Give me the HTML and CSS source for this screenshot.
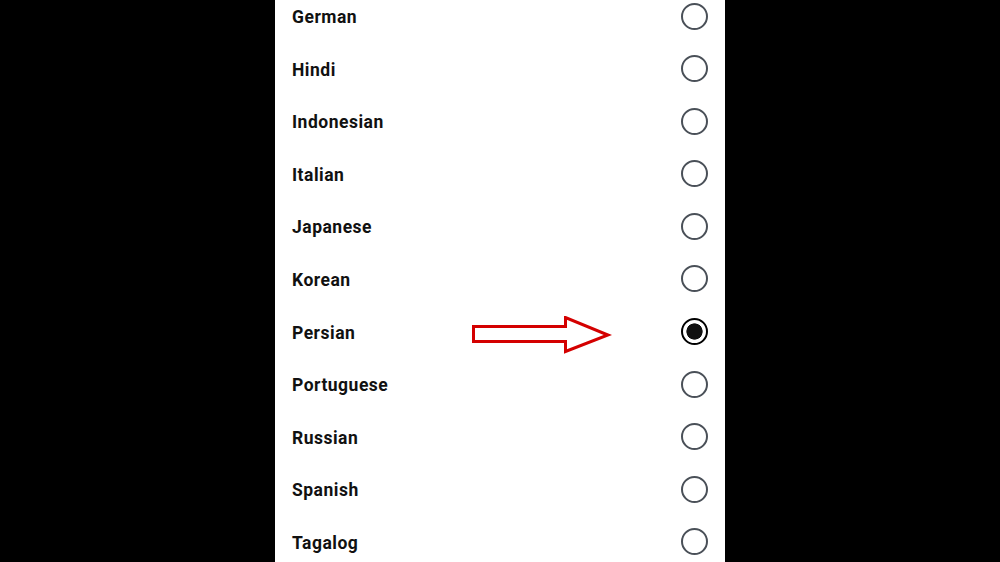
FILE: index.html
```html
<!DOCTYPE html>
<html>
<head>
<meta charset="utf-8">
<link rel="stylesheet" href="styles.css">
</head>
<body>
<div class="stage">
  <div class="panel">
    <ul class="list">
      <li class="row"><span class="label">German</span><span class="radio"></span></li>
      <li class="row"><span class="label">Hindi</span><span class="radio"></span></li>
      <li class="row"><span class="label">Indonesian</span><span class="radio"></span></li>
      <li class="row"><span class="label">Italian</span><span class="radio"></span></li>
      <li class="row"><span class="label">Japanese</span><span class="radio"></span></li>
      <li class="row"><span class="label">Korean</span><span class="radio"></span></li>
      <li class="row"><span class="label">Persian</span><span class="radio checked"></span></li>
      <li class="row"><span class="label">Portuguese</span><span class="radio"></span></li>
      <li class="row"><span class="label">Russian</span><span class="radio"></span></li>
      <li class="row"><span class="label">Spanish</span><span class="radio"></span></li>
      <li class="row"><span class="label">Tagalog</span><span class="radio"></span></li>
    </ul>
    <svg class="arrow" width="140" height="38" viewBox="0 0 140 38">
      <polygon points="1.5,10.5 93.5,10.5 93.5,1.5 136,19 93.5,35.5 93.5,25.5 1.5,25.5" fill="#fff" stroke="#d40000" stroke-width="3" stroke-linejoin="miter"/>
    </svg>
  </div>
</div>
</body>
</html>
```
FILE: styles.css
```css
html, body {
  margin: 0;
  padding: 0;
  background: #000;
  width: 1000px;
  height: 562px;
  overflow: hidden;
}
.stage {
  display: flex;
  justify-content: center;
  height: 562px;
}
.panel {
  position: relative;
  width: 450px;
  background: #fff;
  overflow: hidden;
  height: 562px;
}
.list {
  list-style: none;
  margin: -10.3px 0 0 0;
  padding: 0;
}
.row {
  height: 52.6px;
  display: flex;
  align-items: center;
  justify-content: space-between;
  padding: 0 17px;
}
.label {
  font-family: "Roboto", "Liberation Sans", sans-serif;
  font-weight: 700;
  font-size: 17.5px;
  color: #111;
  letter-spacing: 0.5px;
  padding-top: 2px;
}
.radio {
  width: 23px;
  height: 23px;
  border: 2px solid #4a5058;
  border-radius: 50%;
  box-sizing: content-box;
}
.radio.checked {
  width: 23px;
  height: 23px;
  border: 2.2px solid #000;
  background: radial-gradient(circle, #111 0, #111 7.8px, #fff 8.4px);
}
.arrow {
  position: absolute;
  left: 197px;
  top: 316px;
}
```
